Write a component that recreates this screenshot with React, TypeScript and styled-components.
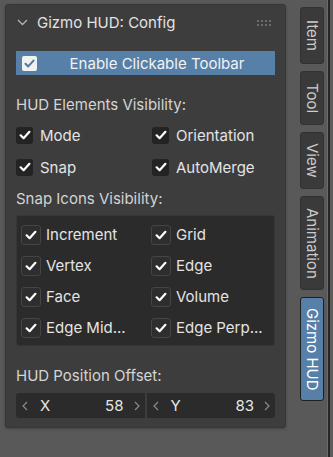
import React from "react";
import styled, { createGlobalStyle } from "styled-components";

const GlobalStyle = createGlobalStyle`
  html, body {
    margin: 0;
    padding: 0;
    background: #595959;
  }
  body {
    font-family: Inter, "Noto Sans", "DejaVu Sans", sans-serif;
    font-size: 15px;
    color: #dcdcdc;
  }
`;

const Screen = styled.div`
  display: flex;
  width: 333px;
  height: 457px;
  background: #595959;
  overflow: hidden;
`;

const Region = styled.div`
  width: 295px;
  padding: 4px 0 0 5px;
  box-sizing: border-box;
`;

const Panel = styled.div`
  width: 281px;
  box-sizing: border-box;
  background: #3d3d3d;
  border: 1px solid #363636;
  border-radius: 3px;
  box-shadow: 0 1px 3px rgba(0, 0, 0, 0.25);
  padding: 0 10px 9px 10px;
  display: flex;
  flex-direction: column;
`;

const Header = styled.div`
  height: 35px;
  display: flex;
  align-items: center;
  color: #e2e2e2;
`;

const Chevron = styled.svg`
  margin: 0 9px 0 1px;
`;

const HeaderTitle = styled.span`
  flex: 1;
`;

const Grip = styled.div`
  display: grid;
  grid-template-columns: repeat(4, 2px);
  grid-auto-rows: 2px;
  column-gap: 2px;
  row-gap: 2px;
  margin-right: 4px;

  & > span {
    background: #6e6e6e;
  }
`;

const ToggleButton = styled.div`
  margin-top: 11px;
  height: 24px;
  background: #5680a7;
  display: flex;
  align-items: center;
  padding-left: 6px;
  color: #f2f2f2;
`;

const ToggleText = styled.span`
  flex: 1;
  text-align: center;
  margin-left: 2px;
`;

const WhiteBox = styled.span`
  width: 15px;
  height: 15px;
  background: #f2f2f2;
  border-radius: 2px;
  display: flex;
  align-items: center;
  justify-content: center;
`;

const SectionLabel = styled.div<{ $top: number }>`
  margin-top: ${(p) => p.$top}px;
  height: 26px;
  display: flex;
  align-items: center;
  color: #d4d4d4;
`;

const CheckGrid = styled.div<{ $col: number; $row: number }>`
  display: grid;
  grid-template-columns: ${(p) => p.$col}px 1fr;
  grid-auto-rows: ${(p) => p.$row}px;
  margin-top: 2px;
`;

const CheckRow = styled.div<{ $gap: number }>`
  display: flex;
  align-items: center;
  gap: ${(p) => p.$gap}px;
  color: #e4e4e4;
  white-space: nowrap;
`;

const Box = styled.span<{ $size: number; $framed?: boolean }>`
  width: ${(p) => p.$size}px;
  height: ${(p) => p.$size}px;
  box-sizing: border-box;
  border-radius: 3px;
  background: ${(p) => (p.$framed ? "#2e2e2e" : "#232323")};
  border: ${(p) => (p.$framed ? "1px solid #454545" : "none")};
  display: flex;
  align-items: center;
  justify-content: center;
  flex-shrink: 0;
`;

const SnapBox = styled.div`
  margin-top: 4px;
  background: #2b2b2b;
  border: 1px solid #363636;
  border-radius: 3px;
  padding: 3px 0 2px 4px;

  & > div {
    margin-top: 0;
  }
`;

const Fields = styled.div`
  margin-top: 5px;
  display: flex;
  gap: 2px;
`;

const NumField = styled.div<{ $side: "left" | "right" }>`
  flex: 1;
  height: 25px;
  background: #2b2b2b;
  border-radius: ${(p) => (p.$side === "left" ? "3px 0 0 3px" : "0 3px 3px 0")};
  display: flex;
  align-items: center;
  padding: 0 5px 0 6px;
  color: #e6e6e6;
`;

const AxisName = styled.span`
  margin-left: 12px;
  flex: 1;
`;

const AxisValue = styled.span`
  margin-right: 10px;
`;

const TabColumn = styled.div`
  width: 32px;
  padding: 7px 0 0 5px;
  box-sizing: border-box;
  display: flex;
  flex-direction: column;
  gap: 7px;
`;

const Tab = styled.div<{ $h: number; $active?: boolean }>`
  width: 24px;
  height: ${(p) => p.$h}px;
  box-sizing: border-box;
  background: ${(p) => (p.$active ? "#5680a7" : "#3a3a3a")};
  border: 1px solid ${(p) => (p.$active ? "#1f1f1f" : "#323232")};
  border-radius: 3px;
  display: flex;
  align-items: center;
  justify-content: center;
  color: ${(p) => (p.$active ? "#ffffff" : "#cccccc")};

  & > span {
    writing-mode: vertical-rl;
    white-space: nowrap;
  }
`;

const Divider = styled.div`
  width: 2px;
  border-left: 1px solid #6a6a6a;
  background: #262626;
`;

const Rest = styled.div`
  flex: 1;
  background: #5d5d5d;
`;

const Check = ({ color = "#ffffff", size = 12 }: { color?: string; size?: number }) => (
  <svg width={size} height={size} viewBox="0 0 12 12">
    <path
      d="M1.6 6.3 L4.6 9.2 L10.4 2.8"
      fill="none"
      stroke={color}
      strokeWidth={2.2}
      strokeLinecap="round"
      strokeLinejoin="round"
    />
  </svg>
);

const Arrow = ({ dir }: { dir: "left" | "right" }) => (
  <svg width="6" height="10" viewBox="0 0 6 10">
    <path
      d={dir === "left" ? "M5 1 L1 5 L5 9" : "M1 1 L5 5 L1 9"}
      fill="none"
      stroke="#8a8a8a"
      strokeWidth="1.2"
    />
  </svg>
);

const hudItems = ["Mode", "Orientation", "Snap", "AutoMerge"];
const snapItems = [
  "Increment",
  "Grid",
  "Vertex",
  "Edge",
  "Face",
  "Volume",
  "Edge Mid...",
  "Edge Perp...",
];

const tabs = [
  { name: "Item", h: 57 },
  { name: "Tool", h: 54 },
  { name: "View", h: 57 },
  { name: "Animation", h: 94 },
  { name: "Gizmo HUD", h: 104, active: true },
];

export default function App() {
  return (
    <Screen>
      <GlobalStyle />
      <Region>
        <Panel>
          <Header>
            <Chevron width="11" height="7" viewBox="0 0 11 7">
              <path d="M1 1 L5.5 5.5 L10 1" fill="none" stroke="#b4b4b4" strokeWidth="1.3" />
            </Chevron>
            <HeaderTitle>Gizmo HUD: Config</HeaderTitle>
            <Grip>
              {Array.from({ length: 8 }).map((_, i) => (
                <span key={i} />
              ))}
            </Grip>
          </Header>

          <ToggleButton>
            <WhiteBox>
              <Check color="#4f7aa0" size={11} />
            </WhiteBox>
            <ToggleText>Enable Clickable Toolbar</ToggleText>
          </ToggleButton>

          <SectionLabel $top={16}>HUD Elements Visibility:</SectionLabel>
          <CheckGrid $col={136} $row={32}>
            {hudItems.map((name) => (
              <CheckRow key={name} $gap={7}>
                <Box $size={17}>
                  <Check />
                </Box>
                {name}
              </CheckRow>
            ))}
          </CheckGrid>

          <SectionLabel $top={2}>Snap Icons Visibility:</SectionLabel>
          <SnapBox>
            <CheckGrid $col={130} $row={31}>
              {snapItems.map((name) => (
                <CheckRow key={name} $gap={5}>
                  <Box $size={20} $framed>
                    <Check />
                  </Box>
                  {name}
                </CheckRow>
              ))}
            </CheckGrid>
          </SnapBox>

          <SectionLabel $top={16}>HUD Position Offset:</SectionLabel>
          <Fields>
            <NumField $side="left">
              <Arrow dir="left" />
              <AxisName>X</AxisName>
              <AxisValue>58</AxisValue>
              <Arrow dir="right" />
            </NumField>
            <NumField $side="right">
              <Arrow dir="left" />
              <AxisName>Y</AxisName>
              <AxisValue>83</AxisValue>
              <Arrow dir="right" />
            </NumField>
          </Fields>
        </Panel>
      </Region>
      <TabColumn>
        {tabs.map((t) => (
          <Tab key={t.name} $h={t.h} $active={t.active}>
            <span>{t.name}</span>
          </Tab>
        ))}
      </TabColumn>
      <Divider />
      <Rest />
    </Screen>
  );
}
